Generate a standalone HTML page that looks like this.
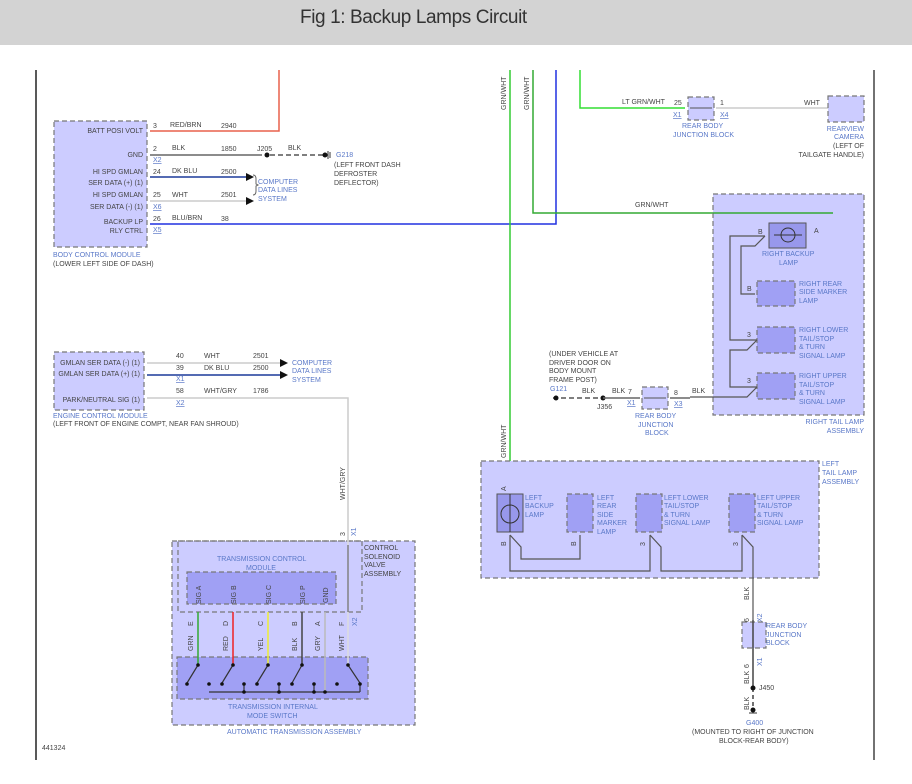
<!DOCTYPE html>
<html><head><meta charset="utf-8"><style>
html,body{margin:0;padding:0;background:#fff;width:912px;height:784px;overflow:hidden}
#hd{position:absolute;left:0;top:0;width:912px;height:45px;background:#d3d3d3}
#hd span{position:absolute;left:300px;top:7px;font:19px "Liberation Sans",sans-serif;color:#333;letter-spacing:-0.4px}
svg{position:absolute;left:0;top:0}
text{font-family:"Liberation Sans",sans-serif;font-size:7px;fill:#444}
.b{fill:#5a78c8}
.m{fill:#ccccff;stroke:#777;stroke-width:1.2;stroke-dasharray:5,3}
.d{fill:#a0a0f4;stroke:#777;stroke-width:1.2;stroke-dasharray:5,3}
.w{fill:none;stroke-width:1.5}
</style></head><body>
<div id="hd"><span>Fig 1: Backup Lamps Circuit</span></div>
<svg width="912" height="784" viewBox="0 0 912 784">
<line x1="36" y1="70" x2="36" y2="760" stroke="#222" stroke-width="1.5"/>
<line x1="874" y1="70" x2="874" y2="760" stroke="#444" stroke-width="1.5"/>
<text x="42" y="750">441324</text>

<!-- BCM -->
<rect class="m" x="54" y="121" width="93" height="126"/>
<g text-anchor="end">
<text x="143" y="133">BATT POSI VOLT</text>
<text x="143" y="157">GND</text>
<text x="143" y="174">HI SPD GMLAN</text>
<text x="143" y="185">SER DATA (+) (1)</text>
<text x="143" y="197">HI SPD GMLAN</text>
<text x="143" y="209">SER DATA (-) (1)</text>
<text x="143" y="224">BACKUP LP</text>
<text x="143" y="233">RLY CTRL</text>
</g>
<text class="b" x="53" y="257">BODY CONTROL MODULE</text>
<text x="53" y="266">(LOWER LEFT SIDE OF DASH)</text>
<g>
<text x="153" y="128">3</text><text x="170" y="127">RED/BRN</text><text x="221" y="128">2940</text>
<text x="153" y="151">2</text><text x="172" y="150">BLK</text><text x="221" y="151">1850</text><text x="257" y="151">J205</text><text x="288" y="150">BLK</text>
<text class="b" x="153" y="162" text-decoration="underline">X2</text>
<text x="153" y="174">24</text><text x="172" y="173">DK BLU</text><text x="221" y="174">2500</text>
<text x="153" y="197">25</text><text x="172" y="197">WHT</text><text x="221" y="197">2501</text>
<text class="b" x="153" y="209" text-decoration="underline">X6</text>
<text x="153" y="221">26</text><text x="172" y="220">BLU/BRN</text><text x="221" y="221">38</text>
<text class="b" x="153" y="232" text-decoration="underline">X5</text>
<text class="b" x="258" y="184">COMPUTER</text><text class="b" x="258" y="192">DATA LINES</text><text class="b" x="258" y="201">SYSTEM</text>
<text class="b" x="336" y="157">G218</text>
<text x="334" y="167">(LEFT FRONT DASH</text><text x="334" y="176">DEFROSTER</text><text x="334" y="185">DEFLECTOR)</text>
</g>
<polyline class="w" stroke="#e8604c" points="150,131 279,131 279,70"/>
<line x1="150" y1="155" x2="262" y2="155" stroke="#666" stroke-width="1.5"/>
<circle cx="267" cy="155" r="2.5" fill="#111"/>
<line x1="270" y1="155" x2="325" y2="155" stroke="#555" stroke-width="1.5" stroke-dasharray="5,3"/>
<circle cx="325" cy="155" r="2.5" fill="#111"/><line x1="328" y1="151" x2="328" y2="159" stroke="#333"/><line x1="330" y1="152" x2="330" y2="158" stroke="#333"/>
<line x1="150" y1="177" x2="248" y2="177" stroke="#1b3a9a" stroke-width="1.5"/><polygon points="246,173 254,177 246,181" fill="#111"/>
<line x1="150" y1="201" x2="248" y2="201" stroke="#ccc" stroke-width="1.5"/><polygon points="246,197 254,201 246,205" fill="#111"/>
<path d="M253,175 q3,0 3,4 v5 l2,1 l-2,1 v5 q0,4 -3,4" fill="none" stroke="#666"/>
<polyline class="w" stroke="#2030e0" points="150,224 556,224 556,70"/>

<!-- ECM -->
<rect class="m" x="54" y="352" width="90" height="58"/>
<g text-anchor="end"><text x="140" y="365">GMLAN SER DATA (-) (1)</text><text x="140" y="376">GMLAN SER DATA (+) (1)</text><text x="140" y="402">PARK/NEUTRAL SIG (1)</text></g>
<text class="b" x="53" y="418">ENGINE CONTROL MODULE</text>
<text x="53" y="426">(LEFT FRONT OF ENGINE COMPT, NEAR FAN SHROUD)</text>
<text x="176" y="358">40</text><text x="204" y="358">WHT</text><text x="253" y="358">2501</text>
<text x="176" y="370">39</text><text x="204" y="370">DK BLU</text><text x="253" y="370">2500</text>
<text class="b" x="176" y="381" text-decoration="underline">X1</text>
<text x="176" y="393">58</text><text x="204" y="393">WHT/GRY</text><text x="253" y="393">1786</text>
<text class="b" x="176" y="405" text-decoration="underline">X2</text>
<text class="b" x="292" y="365">COMPUTER</text><text class="b" x="292" y="373">DATA LINES</text><text class="b" x="292" y="382">SYSTEM</text>
<line x1="147" y1="363" x2="282" y2="363" stroke="#ccc" stroke-width="1.5"/><polygon points="280,359 288,363 280,367" fill="#111"/>
<line x1="147" y1="375" x2="282" y2="375" stroke="#1b3a9a" stroke-width="1.5"/><polygon points="280,371 288,375 280,379" fill="#111"/>
<polyline class="w" stroke="#ccc" points="147,398 348,398 348,540"/>
<text x="0" y="0" transform="translate(345,500) rotate(-90)">WHT/GRY</text>
<text x="0" y="0" transform="translate(345,536) rotate(-90)">3</text>
<text class="b" x="0" y="0" transform="translate(356,536) rotate(-90)">X1</text>

<!-- transmission -->
<rect class="m" x="172" y="541" width="243" height="184"/>
<rect x="178" y="541" width="184" height="71" fill="none" stroke="#777" stroke-width="1.2" stroke-dasharray="5,3"/>
<text class="b" x="217" y="561">TRANSMISSION CONTROL</text><text class="b" x="246" y="570">MODULE</text>
<text x="364" y="550">CONTROL</text><text x="364" y="559">SOLENOID</text><text x="364" y="567">VALVE</text><text x="364" y="576">ASSEMBLY</text>
<rect class="d" x="187" y="572" width="149" height="32"/>
<rect class="d" x="177" y="657" width="191" height="42"/>
<text class="b" x="228" y="709">TRANSMISSION INTERNAL</text><text class="b" x="247" y="718">MODE SWITCH</text>
<text class="b" x="227" y="734">AUTOMATIC TRANSMISSION ASSEMBLY</text>
<g>
<line x1="198" y1="612" x2="198" y2="665" stroke="#3a3" stroke-width="1.5"/>
<line x1="233" y1="612" x2="233" y2="665" stroke="#e22" stroke-width="1.5"/>
<line x1="268" y1="612" x2="268" y2="665" stroke="#ee3" stroke-width="1.5"/>
<line x1="302" y1="612" x2="302" y2="665" stroke="#444" stroke-width="1.5"/>
<line x1="325" y1="612" x2="325" y2="692" stroke="#bbb" stroke-width="1.5"/>
<line x1="348" y1="540" x2="348" y2="665" stroke="#ddd" stroke-width="1.5"/>
<line x1="348" y1="545" x2="348" y2="612" stroke="#555" stroke-width="1"/>
<path d="M209,692 H360 M244,692 V683 M279,692 V683 M314,692 V683 M198,665 L187,683 M233,665 L222,683 M268,665 L257,683 M302,665 L292,683 M348,665 L360,683 V692" stroke="#333" fill="none" stroke-width="1.2"/>
<g fill="#111"><circle cx="198" cy="665" r="1.8"/><circle cx="233" cy="665" r="1.8"/><circle cx="268" cy="665" r="1.8"/><circle cx="302" cy="665" r="1.8"/><circle cx="348" cy="665" r="1.8"/><circle cx="187" cy="684" r="1.8"/><circle cx="222" cy="684" r="1.8"/><circle cx="257" cy="684" r="1.8"/><circle cx="292" cy="684" r="1.8"/><circle cx="337" cy="684" r="1.8"/><circle cx="209" cy="684" r="1.8"/><circle cx="244" cy="684" r="1.8"/><circle cx="279" cy="684" r="1.8"/><circle cx="314" cy="684" r="1.8"/><circle cx="360" cy="684" r="1.8"/><circle cx="244" cy="692" r="1.8"/><circle cx="279" cy="692" r="1.8"/><circle cx="314" cy="692" r="1.8"/><circle cx="325" cy="692" r="1.8"/></g>
<g transform="rotate(-90)">
<text x="-604" y="201">SIG A</text><text x="-604" y="236">SIG B</text><text x="-604" y="271">SIG C</text><text x="-604" y="305">SIG P</text><text x="-603" y="328">GND</text>
<text x="-626" y="193">E</text><text x="-626" y="228">D</text><text x="-626" y="263">C</text><text x="-626" y="297">B</text><text x="-626" y="320">A</text><text x="-626" y="344">F</text>
<text x="-651" y="193">GRN</text><text x="-651" y="228">RED</text><text x="-651" y="263">YEL</text><text x="-651" y="297">BLK</text><text x="-651" y="320">GRY</text><text x="-651" y="344">WHT</text>
<text class="b" x="-626" y="357">X2</text>
</g>
</g>

<!-- verticals top right -->
<line x1="510" y1="70" x2="510" y2="495" stroke="#3c3" stroke-width="1.5"/>
<polyline class="w" stroke="#3a3" points="533,70 533,213 833,213 833,235 812,235"/>
<polyline class="w" stroke="#3d3" points="580,70 580,108 685,108"/>
<line x1="716" y1="108" x2="828" y2="108" stroke="#ccc" stroke-width="1.5"/>
<g transform="rotate(-90)"><text x="-110" y="506">GRN/WHT</text><text x="-110" y="529">GRN/WHT</text><text x="-458" y="506">GRN/WHT</text></g>
<text x="622" y="104">LT GRN/WHT</text><text x="674" y="105">25</text><text class="b" x="673" y="117" text-decoration="underline">X1</text>
<text x="720" y="105">1</text><text class="b" x="720" y="117" text-decoration="underline">X4</text><text x="804" y="105">WHT</text>
<rect class="m" x="688" y="97" width="26" height="23"/>
<line x1="690" y1="108" x2="712" y2="108" stroke="#555"/>
<text class="b" x="682" y="128">REAR BODY</text><text class="b" x="673" y="137">JUNCTION BLOCK</text>
<rect class="m" x="828" y="96" width="36" height="26"/>
<g text-anchor="end"><text class="b" x="864" y="131">REARVIEW</text><text class="b" x="864" y="139">CAMERA</text><text x="864" y="148">(LEFT OF</text><text x="864" y="157">TAILGATE HANDLE)</text></g>
<text x="635" y="207">GRN/WHT</text>

<!-- right tail assembly -->
<rect class="m" x="713" y="194" width="151" height="221"/>
<polyline class="w" stroke="#3a3" points="713,213 833,213"/>
<rect x="769" y="223" width="37" height="25" fill="#9898ec" stroke="#555"/>
<circle cx="788" cy="235" r="7" fill="none" stroke="#333"/><line x1="774" y1="235" x2="802" y2="235" stroke="#333"/>
<text class="b" x="762" y="256">RIGHT BACKUP</text><text class="b" x="779" y="265">LAMP</text>
<text x="758" y="234">B</text><text x="814" y="233">A</text>
<rect class="d" x="757" y="281" width="38" height="25"/>
<rect class="d" x="757" y="327" width="38" height="26"/>
<rect class="d" x="757" y="373" width="38" height="26"/>
<text class="b" x="799" y="286">RIGHT REAR</text><text class="b" x="799" y="294">SIDE MARKER</text><text class="b" x="799" y="303">LAMP</text>
<text class="b" x="799" y="332">RIGHT LOWER</text><text class="b" x="799" y="341">TAIL/STOP</text><text class="b" x="799" y="349">&amp; TURN</text><text class="b" x="799" y="358">SIGNAL LAMP</text>
<text class="b" x="799" y="378">RIGHT UPPER</text><text class="b" x="799" y="387">TAIL/STOP</text><text class="b" x="799" y="395">&amp; TURN</text><text class="b" x="799" y="404">SIGNAL LAMP</text>
<text x="747" y="291">B</text><text x="747" y="337">3</text><text x="747" y="383">3</text>
<g text-anchor="end"><text class="b" x="864" y="424">RIGHT TAIL LAMP</text><text class="b" x="864" y="433">ASSEMBLY</text></g>
<path d="M765,236 H730 V340 H757 M765,236 L755,246 H741 V294 H755 M757,340 L747,350 H730 V387 H757 M757,387 L747,397 H690" stroke="#555" fill="none" stroke-width="1.2"/>
<text x="549" y="356">(UNDER VEHICLE AT</text><text x="549" y="365">DRIVER DOOR ON</text><text x="549" y="373">BODY MOUNT</text><text x="549" y="382">FRAME POST)</text>
<text class="b" x="550" y="391">G121</text><text x="582" y="393">BLK</text><text x="612" y="393">BLK</text><text x="628" y="394">7</text><text x="674" y="395">8</text><text x="692" y="393">BLK</text>
<text x="597" y="409">J356</text><text class="b" x="627" y="405" text-decoration="underline">X1</text><text class="b" x="674" y="406" text-decoration="underline">X3</text>
<line x1="553" y1="398" x2="603" y2="398" stroke="#555" stroke-width="1.5" stroke-dasharray="5,3"/>
<circle cx="556" cy="398" r="2.5" fill="#111"/><circle cx="603" cy="398" r="2.5" fill="#111"/>
<line x1="603" y1="398" x2="640" y2="398" stroke="#666" stroke-width="1.5"/>
<line x1="670" y1="398" x2="690" y2="398" stroke="#666" stroke-width="1.5"/>
<rect class="m" x="642" y="387" width="26" height="22"/><line x1="644" y1="398" x2="666" y2="398" stroke="#555"/>
<text class="b" x="635" y="418">REAR BODY</text><text class="b" x="638" y="427">JUNCTION</text><text class="b" x="645" y="435">BLOCK</text>

<!-- left tail assembly -->
<rect class="m" x="481" y="461" width="338" height="117"/>
<text class="b" x="822" y="466">LEFT</text><text class="b" x="822" y="475">TAIL LAMP</text><text class="b" x="822" y="484">ASSEMBLY</text>
<rect x="497" y="494" width="26" height="38" fill="#9898ec" stroke="#555"/>
<circle cx="510" cy="514" r="9" fill="none" stroke="#333"/><line x1="510" y1="494" x2="510" y2="532" stroke="#333"/>
<rect class="d" x="567" y="494" width="26" height="38"/>
<rect class="d" x="636" y="494" width="26" height="38"/>
<rect class="d" x="729" y="494" width="26" height="38"/>
<text class="b" x="525" y="500">LEFT</text><text class="b" x="525" y="508">BACKUP</text><text class="b" x="525" y="517">LAMP</text>
<text class="b" x="597" y="500">LEFT</text><text class="b" x="597" y="508">REAR</text><text class="b" x="597" y="517">SIDE</text><text class="b" x="597" y="525">MARKER</text><text class="b" x="597" y="534">LAMP</text>
<text class="b" x="664" y="500">LEFT LOWER</text><text class="b" x="664" y="508">TAIL/STOP</text><text class="b" x="664" y="517">&amp; TURN</text><text class="b" x="664" y="525">SIGNAL LAMP</text>
<text class="b" x="757" y="500">LEFT UPPER</text><text class="b" x="757" y="508">TAIL/STOP</text><text class="b" x="757" y="517">&amp; TURN</text><text class="b" x="757" y="525">SIGNAL LAMP</text>
<path d="M510,535 V571 H650 V535 M510,535 L521,547 V559 H580 V535 M650,535 L661,547 V571 H742 V535 M742,535 L753,547 V620" stroke="#555" fill="none" stroke-width="1.2"/>
<g transform="rotate(-90)"><text x="-546" y="506">B</text><text x="-546" y="576">B</text><text x="-546" y="645">3</text><text x="-546" y="738">3</text><text x="-491" y="506">A</text>
<text x="-600" y="749">BLK</text><text x="-622" y="749">6</text><text class="b" x="-622" y="762">X2</text><text x="-668" y="749">6</text><text class="b" x="-666" y="762">X1</text><text x="-684" y="749">BLK</text><text x="-710" y="749">BLK</text></g>
<rect class="m" x="742" y="622" width="24" height="26"/>
<line x1="753" y1="620" x2="753" y2="688" stroke="#444" stroke-width="1.5"/>
<line x1="753" y1="688" x2="753" y2="710" stroke="#444" stroke-width="1.5" stroke-dasharray="4,3"/>
<circle cx="753" cy="688" r="2.5" fill="#111"/><circle cx="753" cy="710" r="2.5" fill="#111"/>
<line x1="749" y1="713" x2="757" y2="713" stroke="#333"/>
<text class="b" x="766" y="628">REAR BODY</text><text class="b" x="766" y="637">JUNCTION</text><text class="b" x="766" y="645">BLOCK</text>
<text x="759" y="690">J450</text>
<text class="b" x="746" y="725">G400</text>
<text x="692" y="734">(MOUNTED TO RIGHT OF JUNCTION</text><text x="719" y="743">BLOCK-REAR BODY)</text>
</svg>
</body></html>
